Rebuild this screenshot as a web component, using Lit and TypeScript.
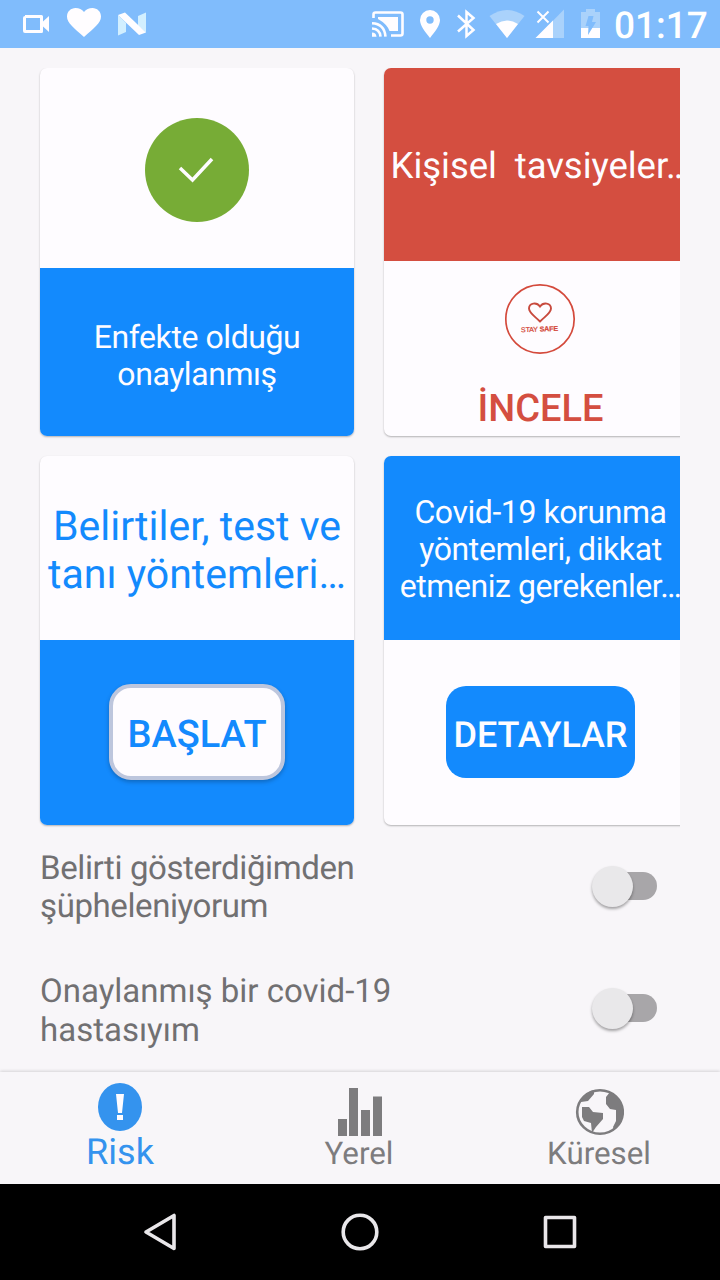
import { LitElement, html, css } from "lit";
import { customElement, property } from "lit/decorators.js";

@customElement("status-bar")
class StatusBar extends LitElement {
  static styles = css`
    :host { display: flex; height: 48px; background: #80bcfc; align-items: center; color: #fff; }
    svg { display: block; flex: none; }
    .time { font: 500 37px/48px Roboto, sans-serif; margin-top: 5px; margin-left: 2px; white-space: nowrap; text-rendering: geometricPrecision; }
  `;
  render() {
    return html`
      <svg width="612" height="48" viewBox="0 0 612 48" fill="#fffdff">
        <path d="M25 15h16.500a1.500 1.500 0 0 1 1.500 1.500v5l6-5.500v16l-6-5.500v5a1.500 1.500 0 0 1-1.500 1.500H25a2 2 0 0 1-2-2v-13a2 2 0 0 1 2-2zm1 3v12h14v-12z" fill-rule="evenodd"/>
        <path d="M84 37C74 28 67 23 67 16.500C67 11.500 71 8 75.500 8C79 8 82 9.500 84 12C86 9.500 89 8 92.500 8C97 8 101 11.500 101 16.500C101 23 94 28 84 37z"/>
        <path d="M118 15l8 8v9l-8 3.500zM138 16l8-3.500v20l-8-7z" fill="#d2efff"/>
        <path d="M118 15l7-2.500 21 20-7 2.500z"/>
        <g fill="none" stroke="#fffdff" stroke-width="2.600">
          <path d="M373.500 18v-3.500q0-2 2-2h25q2 0 2 2v19q0 2-2 2h-9.500"/>
          <path d="M372 23.200q12.500 0.500 13.500 13.500M372 28.500q8 0.500 8.500 8.200"/>
        </g>
        <path d="M378 17h20v14h-8.500q-2.500-7-11.500-12zM372 32.500q4 0 4.500 4.200h-4.500z"/>
        <path d="M430 38C425 31.500 420 25.500 420 20a10 10 0 0 1 20 0c0 5.500-5 11.500-10 18zM430 16.300a3.700 3.700 0 1 0 0 7.400a3.700 3.700 0 0 0 0-7.400z" fill-rule="evenodd"/>
        <path d="M458 15.500l15.500 14.500-7 6V12l7 6L458 31.500" fill="none" stroke="#fffdff" stroke-width="2.500"/>
        <path d="M507 38L489.500 16q17.500-12 35 0z" fill="#aad2fb"/>
        <path d="M507 38L496 24q11-7 22 0z"/>
        <path d="M564 9.500V38h-28z" fill="#aad2fb"/>
        <path d="M553 20.500V38h-17.500z"/>
        <path d="M537.500 11.500l11 11m0-11l-11 11" stroke="#fffdff" stroke-width="2"/>
        <path d="M581 12h5V9h9v3h5v16h-19z" fill="#aad2fb"/>
        <path d="M581 28h19v10h-19z"/>
        <path d="M588.500 16h5l-1.500 6h4l-8 13 0.500-9h-3z" fill="#80bcfc"/>
      </svg>
      <div class="time">01:17</div>`;
  }
}

@customElement("toggle-row")
class ToggleRow extends LitElement {
  @property({ attribute: false }) lines: string[] = [];
  @property({ type: Boolean, reflect: true }) tight = false;
  static styles = css`
    :host { display: flex; justify-content: space-between; align-items: center; height: 77px; padding-right: 22px;
      font: 33px/39px Roboto, sans-serif; color: #717072; text-rendering: geometricPrecision; }
    :host([tight]) { letter-spacing: -0.4px; line-height: 38px; }
    :host([tight]) .label { padding-top: 3px; }
    .label { white-space: pre; padding-top: 5px; }
    .switch { width: 66px; display: flex; align-items: center; margin-top: -1px; }
    .knob { flex: none; width: 41px; height: 41px; border-radius: 50%; background: #e9e8ea; box-shadow: 0 2px 3px rgba(0,0,0,.35); z-index: 1; }
    .rail { flex: none; width: 45px; height: 28px; border-radius: 14px; background: #a8a6a9; margin-left: -21px; }
  `;
  render() {
    return html`<div class="label">${this.lines.join("\n")}</div>
      <div class="switch"><div class="knob"></div><div class="rail"></div></div>`;
  }
}

@customElement("app-root")
class AppRoot extends LitElement {
  static styles = css`
    :host { display: flex; flex-direction: column; width: 720px; height: 1280px; background: #f8f6f9; font-family: Roboto, sans-serif; overflow: hidden; text-rendering: geometricPrecision; }
    * { box-sizing: border-box; }
    svg { display: block; }
    main { height: 1024px; padding: 20px 40px 0; overflow: hidden; flex: none; }
    .grid { display: grid; grid-template-columns: 314px 313px; grid-template-rows: 368px 369px; column-gap: 30px; row-gap: 20px; overflow: hidden; height: 760px; margin: 0 0 0 -4px; padding-left: 4px; }
    .card { border-radius: 7px; background: #fefcff; display: flex; flex-direction: column; overflow: hidden; box-shadow: 0 1px 2px rgba(0,0,0,.28); }
    .part { display: flex; flex-direction: column; align-items: center; justify-content: center; white-space: pre; text-align: center; flex: none; }
    .fill { flex: 1; }
    .blue { background: #138afd; color: #fefcff; }
    .red { background: #d44e40; color: #fefcff; height: 193px; }
    .h200 { height: 200px; padding-top: 4px; }
    .h184 { height: 184px; padding-top: 3px; }
    .status { padding-top: 7px; }
    .t32 { font-size: 32px; line-height: 37px; letter-spacing: -0.43px; }
    .t36 { font-size: 36.500px; line-height: 42px; padding-top: 2px; letter-spacing: -0.05px; }
    .t41 { font-size: 41px; line-height: 48px; color: #138afd; padding-top: 5px; }
    .advice { padding-top: 22px; justify-content: flex-start; }
    .advice svg { margin-right: 1px; }
    .link { font-weight: 500; font-size: 38px; line-height: 44px; color: #d44e40; margin-top: 32px; }
    .btn { font-weight: 500; font-size: 37px; line-height: 44px; display: flex; align-items: center; justify-content: center; padding-top: 6px; }
    .action { padding-bottom: 2px; }
    .start { width: 176px; height: 96px; border: 4px solid #bdc6dd; border-radius: 22px; background: #fefcff; color: #138afd; box-shadow: 0 2px 4px rgba(0,0,0,.25); font-size: 38px; }
    .details { width: 189px; height: 92px; border-radius: 20px; background: #138afd; color: #fefcff; letter-spacing: -0.1px; font-size: 36px; }
    .rows { display: flex; flex-direction: column; gap: 45px; padding-top: 20px; }
    nav { height: 112px; flex: none; display: grid; grid-template-columns: repeat(3, 240px); color: #7d7c7e; box-shadow: 0 -1px 3px rgba(0,0,0,.14); background: #f8f6f9; }
    .tab { display: flex; flex-direction: column; align-items: center; font-size: 31.300px; line-height: 35px; padding-right: 2px; }
    .active { color: #3493ee; font-size: 36px; line-height: 42px; padding-right: 0; }
    .system { height: 96px; background: #000; flex: none; }
    .badge { font: 700 7px "Liberation Sans", sans-serif; }
  `;
  render() {
    return html`
      <status-bar></status-bar>
      <main>
        <div class="grid">
          <section class="card">
            <div class="part h200"><svg width="104" height="104" viewBox="0 0 104 104"><circle cx="52" cy="52" r="52" fill="#77ac36"/><path d="M35 50l12.500 12L67 41" fill="none" stroke="#fefcff" stroke-width="3.500"/></svg></div>
            <div class="part blue fill t32 status">Enfekte olduğu
onaylanmış</div>
          </section>
          <section class="card">
            <div class="part red t36">Kişisel  tavsiyeler…</div>
            <div class="part fill advice">
              <svg width="72" height="72" viewBox="0 0 72 72"><circle cx="36" cy="36" r="34.200" fill="none" stroke="#d44a3c" stroke-width="1.700"/><path d="M36 38.500C31 33.500 25 30 25 25.500C25 20 32.500 18.500 36 23.500C39.500 18.500 47 20 47 25.500C47 30 41 33.500 36 38.500z" fill="none" stroke="#c84a3e" stroke-width="1.900"/><text class="badge" fill="#d44a3c" stroke="#d44a3c" stroke-width="0.250" x="17" y="48.500" textLength="37" transform="rotate(-2 36 46)"><tspan font-weight="400">STAY</tspan> SAFE</text></svg>
              <div class="link">İNCELE</div>
            </div>
          </section>
          <section class="card">
            <div class="part h184 t41">Belirtiler, test ve
tanı yöntemleri…</div>
            <div class="part blue fill action"><div class="btn start">BAŞLAT</div></div>
          </section>
          <section class="card">
            <div class="part h184 t32 blue">Covid-19 korunma
yöntemleri, dikkat
etmeniz gerekenler…</div>
            <div class="part fill action"><div class="btn details">DETAYLAR</div></div>
          </section>
        </div>
        <div class="rows">
          <toggle-row tight .lines=${["Belirti gösterdiğimden", "şüpheleniyorum"]}></toggle-row>
          <toggle-row .lines=${["Onaylanmış bir covid-19", "hastasıyım"]}></toggle-row>
        </div>
      </main>
      <nav>
        <div class="tab active"><svg width="48" height="59" viewBox="0 0 48 59"><ellipse cx="24" cy="35" rx="22" ry="24" fill="#3493ee"/><path d="M20 22h8l-2 19h-4zM21 43h6v5h-6z" fill="#fefcff"/></svg><span>Risk</span></div>
        <div class="tab"><svg width="48" height="64" viewBox="0 0 48 64"><path d="M3 47h9v17H3zM14 16h9v48h-9zM26 38h9v26h-9zM38 24.500h9V64h-9z" fill="#7d7c7e"/></svg><span>Yerel</span></div>
        <div class="tab"><svg width="50" height="64" viewBox="0 0 50 64"><ellipse cx="26" cy="40" rx="22.800" ry="21.800" fill="none" stroke="#7d7c7e" stroke-width="2.600"/><path d="M7 29Q13 19 20 18v4l-6 7-7 1zM36 20q11 5 13 18 0 12-9 20l-1-3 3-6V38l-6-1-4-5v-7zM8 35h7l4 5 10 1v6l-7 8-4 6-1-10-7-2-2-4z" fill="#7d7c7e"/></svg><span>Küresel</span></div>
      </nav>
      <svg class="system" width="720" height="96" viewBox="0 0 720 96"><g fill="none" stroke="#e9e7ea" stroke-width="3.600" stroke-linejoin="round"><path d="M174 31.500v33L146 48z"/><circle cx="360" cy="48" r="16.800"/><rect x="545.500" y="33.500" width="29" height="29"/></g></svg>`;
  }
}
